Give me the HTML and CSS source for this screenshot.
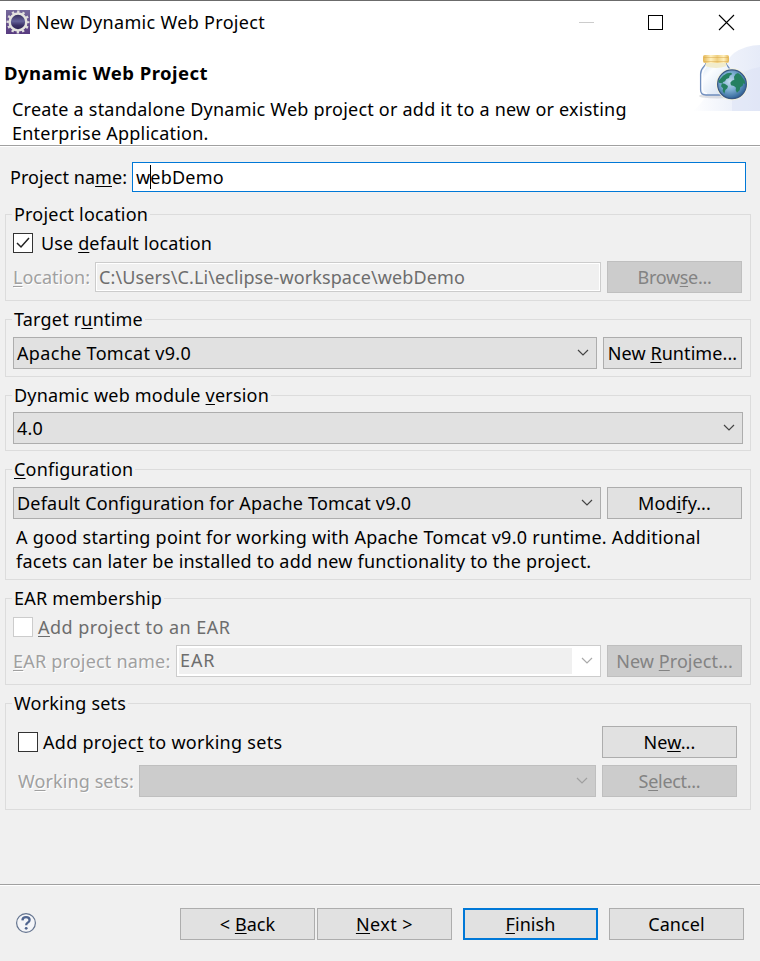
FILE: index.html
```html
<!DOCTYPE html>
<html lang="en">
<head>
<meta charset="utf-8">
<title>New Dynamic Web Project</title>
<link rel="stylesheet" href="styles.css">
</head>
<body>
<div class="window">
  <header class="titlebar">
    <svg class="app-icon" width="24" height="24" viewBox="0 0 24 24">
      <defs><linearGradient id="eclipse" x1="0" y1="0" x2="0" y2="1"><stop offset="0" stop-color="#75699b"/><stop offset="1" stop-color="#583b80"/></linearGradient>
      <linearGradient id="core" x1="0" y1="0" x2="0" y2="1"><stop offset="0" stop-color="#2c2453"/><stop offset=".45" stop-color="#66639a"/><stop offset=".7" stop-color="#3b3167"/><stop offset="1" stop-color="#2b2150"/></linearGradient></defs>
      <rect width="24" height="24" fill="url(#eclipse)"/>
      <circle cx="12" cy="12" r="10.3" fill="none" stroke="#dedcdc" stroke-width="2.4" stroke-dasharray="2.4 2.993" stroke-dashoffset="1.2"/>
      <circle cx="12" cy="12" r="8.4" fill="url(#core)" stroke="#e5e4df" stroke-width="2.5"/>
    </svg>
    <span class="title">New Dynamic Web Project</span>
    <svg class="controls" width="160" height="20" viewBox="0 0 160 20">
      <path d="M0 9.5h15" stroke="#ccc"/>
      <rect x="69.5" y="2.5" width="14" height="14" fill="none" stroke="#000"/>
      <path d="M140 2l15 15M155 2l-15 15" stroke="#000" stroke-width="1.1"/>
    </svg>
  </header>
  <section class="banner">
    <div class="banner-copy">
      <h1>Dynamic Web Project</h1>
      <p>Create a standalone Dynamic Web project or add it to a new or existing<br>Enterprise Application.</p>
    </div>
    <svg class="banner-art" width="70" height="66" viewBox="0 0 70 66">
      <defs>
        <linearGradient id="sky" x1="0" y1="0" x2="1" y2="0"><stop offset="0" stop-color="#fff"/><stop offset=".6" stop-color="#edf1fa"/><stop offset="1" stop-color="#e6ebf8"/></linearGradient>
        <linearGradient id="lid" x1="0" y1="0" x2="1" y2="0"><stop offset="0" stop-color="#e3b553"/><stop offset=".3" stop-color="#fff1bf"/><stop offset=".55" stop-color="#efcf80"/><stop offset=".8" stop-color="#fff0bd"/><stop offset="1" stop-color="#e3b553"/></linearGradient>
        <linearGradient id="glass" x1="0" y1="0" x2="1" y2="1"><stop offset="0" stop-color="#d2e1f4"/><stop offset=".3" stop-color="#fbfdff"/><stop offset="1" stop-color="#cddcf0"/></linearGradient>
        <radialGradient id="ocean" cx=".42" cy=".4" r=".6"><stop offset="0" stop-color="#c3dcec"/><stop offset=".5" stop-color="#7eaed2"/><stop offset="1" stop-color="#33679b"/></radialGradient>
      </defs>
      <path d="M2 66C18 58 26 24 44 8Q56 0 70 0V66Z" fill="url(#sky)"/>
      <path d="M42 36Q54 24 70 22V66H42Z" fill="#d9e0f4" opacity=".45"/>
      <ellipse cx="27" cy="51" rx="18" ry="2.500" fill="#9b9fa9" opacity=".3"/>
      <path d="M16 18C16 21 10.600 22 10.600 29V45Q10.600 50 16 50H35Q41 50 41 45V29C41 22 36 21 36 18Z" fill="url(#glass)" stroke="#6f8dbd" stroke-width="1.3"/>
      <path d="M17.500 19C17.500 22 12.500 24 12.500 29V44Q13 48.300 17 48.300" fill="none" stroke="#fff" stroke-width="1.2"/>
      <path d="M16 18h20l1 3q-11 4-22 0z" fill="#f1eccd"/>
      <rect x="13" y="10" width="26" height="8" rx="2" fill="url(#lid)"/>
      <path d="M14 12.500h24M14 16.500h24" stroke="#d9a648" stroke-width=".7" opacity=".7"/>
      <circle cx="42" cy="39.300" r="16" fill="#f4f2dc"/>
      <circle cx="42" cy="39.300" r="14.400" fill="url(#ocean)" stroke="#395784" stroke-width="1.2"/>
      <g transform="scale(.3333) translate(0 -9)" fill="#258060">
        <path d="M90 112L99 101L111 94L123 92L127 96L119 101L117 108L109 111L105 118L98 121L101 126L94 124L87 122L85 117Z"/>
        <path d="M95 126L104 125L114 132L112 139L106 144L103 155L98 147L99 139L93 133Z"/>
        <path d="M132 104L137 96L144 93L152 99L158 107L164 116L166 127L160 124L158 131L151 136L149 145L141 152L137 145L138 137L132 132L123 130L121 122L126 116L133 113Z"/>
      </g>
    </svg>
  </section>
  <main>
    <div class="row name-row">
      <span class="label" style="--w:122px">Project na<u>m</u>e:</span>
      <div class="field focused"><span>webDemo</span><i class="caret"></i></div>
    </div>

    <section class="group location">
      <div class="legend">Project location</div>
      <div class="row check-row"><span class="check"><svg width="18" height="18" viewBox="0 0 18 18"><path d="M3 9l4 4 8-9" fill="none" stroke="#222" stroke-width="1.5"/></svg></span><span class="default-label">Use <u>d</u>efault location</span></div>
      <div class="row"><span class="label etched" style="--w:82px"><u>L</u>ocation:</span><div class="field disabled">C:\Users\C.Li\eclipse-workspace\webDemo</div><div class="button off tight">Brow<u>s</u>e...</div></div>
    </section>

    <section class="group runtime">
      <div class="legend">Target r<u>u</u>ntime</div>
      <div class="row"><div class="combo">Apache Tomcat v9.0<svg class="chevron" viewBox="0 0 12 8"><path d="M1 1l5 5 5-5"/></svg></div><div class="button wide">New <u>R</u>untime...</div></div>
    </section>

    <section class="group module">
      <div class="legend">Dynamic web module <u>v</u>ersion</div>
      <div class="row"><div class="combo">4.0<svg class="chevron" viewBox="0 0 12 8"><path d="M1 1l5 5 5-5"/></svg></div></div>
    </section>

    <section class="group config">
      <div class="legend"><u>C</u>onfiguration</div>
      <div class="row"><div class="combo">Default Configuration for Apache Tomcat v9.0<svg class="chevron" viewBox="0 0 12 8"><path d="M1 1l5 5 5-5"/></svg></div><div class="button">Mod<u>i</u>fy...</div></div>
      <p class="hint"><span>A good starting point for working with Apache Tomcat v9.0 runtime. Additional</span><br>facets can later be installed to add new functionality to the project.</p>
    </section>

    <section class="group ear">
      <div class="legend">EAR membership</div>
      <div class="row check-row dim"><span class="check"></span><span class="ear-label"><u>A</u>dd project to an EAR</span></div>
      <div class="row"><span class="label etched" style="--w:163px"><u>E</u>AR project name:</span><div class="combo editable"><span class="inner">EAR</span><svg class="chevron" viewBox="0 0 12 8"><path d="M1 1l5 5 5-5"/></svg></div><div class="button off">New <u>P</u>roject...</div></div>
    </section>

    <section class="group sets">
      <div class="legend">Working sets</div>
      <div class="row check-row"><span class="check"></span><span class="sets-label">Add projec<u>t</u> to working sets</span><div class="button push">Ne<u>w</u>...</div></div>
      <div class="row"><span class="label etched" style="--w:121px">W<u>o</u>rking sets:</span><div class="combo off"><svg class="chevron" viewBox="0 0 12 8"><path d="M1 1l5 5 5-5"/></svg></div><div class="button off tight">S<u>e</u>lect...</div></div>
    </section>
  </main>
  <footer>
    <svg class="help" width="22" height="22" viewBox="0 0 22 22"><circle cx="11" cy="11" r="9.4" fill="#f4f5f8" stroke="#64748f" stroke-width="1.2"/><path d="M7.4 8.3Q7.7 5.2 11 5.2Q14.6 5.2 14.6 8Q14.6 9.7 12.6 10.7Q11.2 11.4 11.2 13.3" fill="none" stroke="#50658f" stroke-width="2.3"/><circle cx="11.2" cy="16.3" r="1.4" fill="#50658f"/></svg>
    <div class="button">&lt; <u>B</u>ack</div>
    <div class="button next"><u>N</u>ext &gt;</div>
    <div class="button primary"><u>F</u>inish</div>
    <div class="button cancel">Cancel</div>
  </footer>
</div>
</body>
</html>
```
FILE: styles.css
```css
* { box-sizing: border-box; }
body { margin: 0; background: #f0f0f0; color: #000; font: 18px/24px "Noto Sans", sans-serif; letter-spacing: .2px; white-space: nowrap; }
h1, p { margin: 0; }
u { text-decoration-thickness: 1px; text-underline-offset: 2px; text-decoration-skip-ink: none; }
.window { width: 760px; height: 961px; display: flex; flex-direction: column; overflow: hidden; }
.titlebar { height: 45px; border-top: 1px solid #6b6b6b; background: #fff; display: flex; align-items: center; padding: 0 21px 2px 6px; flex: none; }
.app-icon { margin-right: 6px; }
.title { letter-spacing: .32px; }
.controls { margin-left: auto; margin-top: 1px; }
.banner { height: 102px; background: #fff; border-bottom: 1px solid #fff; box-shadow: inset 0 -1px #a0a0a0; display: flex; justify-content: space-between; flex: none; }
.banner-copy { padding: 16px 0 0 4px; }
.banner h1 { font-size: 18.5px; line-height: 24px; font-weight: 700; letter-spacing: .46px; }
.banner p { margin: 12px 0 0 8px; letter-spacing: .22px; }
.banner-art { flex: none; }
main { flex: 1; }
.row { display: flex; align-items: center; gap: 6px; }
.label { width: var(--w); margin-right: -6px; flex: none; }
.name-row { padding: 15px 14px 0 10px; height: 45px; }
.name-row .label { letter-spacing: .04px; }
.field { flex: 1; min-width: 0; height: 30px; border: 1px solid #ccc; padding: 0 3px; line-height: 28px; position: relative; }
.focused { border-color: #0078d7; background: #fff; }
.caret { position: absolute; left: 17px; top: 2px; width: 1px; height: 24px; background: #000; }
.field.disabled { color: #6d6d6d; box-shadow: inset 0 0 0 1px #fff; letter-spacing: .1px; }
.etched { color: #a0a0a0; text-shadow: 1px 1px #fff; }
.location .etched { letter-spacing: 0; }
.group { margin-left: 5px; width: 746px; border: 1px solid #dcdcdc; padding: 0 8px 0 7px; margin-bottom: 18px; }
.legend { width: max-content; height: 24px; margin-top: -13px; padding: 0 2px; margin-left: -1px; background: #f0f0f0; }
.check { width: 20px; height: 20px; border: 1px solid #333; background: #fff; flex: none; }
.check svg { display: block; }
.check-row { gap: 5px; }
.default-label { margin-left: 3px; letter-spacing: .13px; }
.ear-label { letter-spacing: .46px; }
.sets-label { letter-spacing: .29px; }
.dim { color: #6d6d6d; }
.dim .check { border-color: #ccc; }
.button { width: 135px; height: 32px; border: 1px solid #adadad; background: #e1e1e1; line-height: 31px; text-align: center; letter-spacing: .08px; flex: none; }
.button.wide { width: 139px; }
.button.tight { letter-spacing: -.3px; }
.button.off, .combo.off { background: #ccc; border-color: #bfbfbf; color: #838383; }
.button.push { margin-left: auto; }
.combo { flex: 1; height: 32px; border: 1px solid #adadad; background: #e1e1e1; line-height: 30px; padding: 0 7px 0 3px; display: flex; align-items: center; justify-content: space-between; }
.runtime .combo { letter-spacing: .33px; }
.chevron { width: 12px; height: 8px; margin-left: auto; fill: none; stroke: #444; stroke-width: 1.2; flex: none; }
.off .chevron { stroke: #a0a0a0; }
.editable { background: #fff; border-color: #ccc; color: #6d6d6d; padding-left: 2px; }
.editable .chevron { stroke: #aaa; }
.inner { width: 393px; height: 26px; line-height: 25px; background: #f0f0f0; padding-left: 1px; letter-spacing: .9px; }
.location { margin-top: 22px; height: 87px; }
.location .check-row { height: 20px; margin: 7px 0 8px; }
.runtime { height: 58px; }
.runtime .row { margin-top: 6px; }
.module { height: 56px; padding-right: 7px; }
.module .row { margin-top: 5px; }
.config { height: 111px; }
.config .row { margin-top: 6px; }
.hint { margin: 6px 0 0 3px; letter-spacing: .19px; }
.hint span { letter-spacing: .26px; }
.ear { height: 87px; }
.ear .check-row { height: 20px; margin: 7px 0 8px; }
.sets { height: 107px; padding-right: 13px; }
.sets .row { margin-left: 5px; }
.sets .check-row { height: 32px; margin-top: 11px; margin-bottom: 7px; }
.sets .etched { letter-spacing: .1px; }
footer { height: 77px; border-top: 1px solid #a0a0a0; box-shadow: inset 0 1px #fff; display: flex; padding: 23px 16px 0 15px; flex: none; }
.help { margin: 4px 143px 0 0; }
.next { margin-left: 2px; letter-spacing: .45px; }
.primary { margin-left: 11px; border: 2px solid #0078d7; line-height: 29px; }
.cancel { margin-left: 11px; }
```
